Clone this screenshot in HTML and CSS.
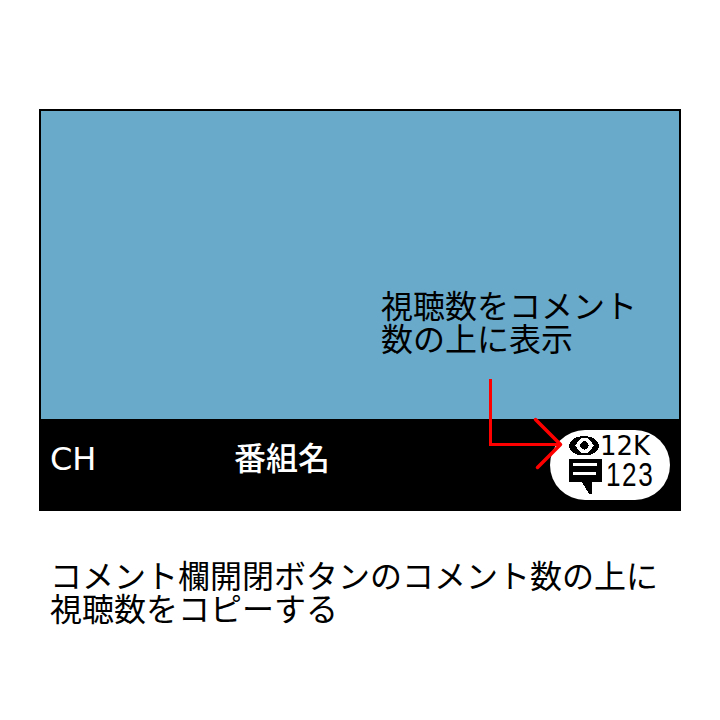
FILE: index.html
```html
<!DOCTYPE html>
<html lang="ja">
<head>
<meta charset="utf-8">
<title>視聴数</title>
<link rel="stylesheet" href="styles.css">
</head>
<body>
<main class="page">
  <section class="player">
    <div class="video">
      <p class="note">視聴数をコメント<br>数の上に表示</p>
    </div>
    <div class="bar">
      <span class="channel">CH</span>
      <span class="program">番組名</span>
      <div class="counter">
        <div class="row views">
          <svg class="eye" width="30" height="20" viewBox="0 0 30 20" shape-rendering="crispEdges">
            <path d="M0 10C0 4 7 0 15 0S30 4 30 10S23 19.500 15 19.500S0 16 0 10Z"/>
            <path fill="#fff" d="M6 9.500L10 5V14ZM25 9.500L21 5V14Z"/>
            <circle cx="15.500" cy="9.500" r="7.700" fill="#fff"/>
            <circle cx="15.500" cy="9.500" r="4.200"/>
          </svg>
          <span class="viewcount">12K</span>
        </div>
        <div class="row comments">
          <svg width="33" height="35" viewBox="0 0 33 35" shape-rendering="crispEdges">
            <path d="M0 0H33V23H23V35H20L13 23H0Z"/>
            <path fill="#fff" d="M4 4H28V7H4ZM4 13H27V16H4Z"/>
          </svg>
          <span class="count">123</span>
        </div>
      </div>
    </div>
    <svg class="arrow" width="76" height="94" viewBox="488 377 76 94">
      <path d="M490.500 379V444.500H561" />
      <path class="head" d="M535.500 419.500L560.500 444.500L537.500 467.500"/>
    </svg>
  </section>
  <p class="caption">コメント欄開閉ボタンのコメント数の上に<br>視聴数をコピーする</p>
</main>
</body>
</html>
```
FILE: styles.css
```css
body {
  margin: 0;
  background: #fff;
  color: #000;
  font-family: "Noto Sans CJK JP", sans-serif;
  font-size: 32px;
  line-height: 33px;
}

p {
  margin: 0;
  white-space: nowrap;
}

.page {
  box-sizing: border-box;
  height: 720px;
  padding: 109px 39px 0;
  overflow: hidden;
}

.player {
  position: relative;
  box-sizing: border-box;
  height: 402px;
  border: 2px solid #000;
  background: #000;
}

.video {
  box-sizing: border-box;
  height: 308px;
  padding: 177px 0 0 340px;
  background: #69a9ca;
}

.bar {
  display: flex;
  box-sizing: border-box;
  height: 90px;
  padding: 11px 9px 0;
  color: #fff;
}

.channel {
  width: 184px;
  padding-top: 13px;
  font-family: "DejaVu Sans", sans-serif;
}

.program {
  padding-top: 10px;
  font-weight: 500;
}

.counter {
  box-sizing: border-box;
  width: 120px;
  height: 70px;
  margin-left: auto;
  padding: 5px 0 0 19px;
  border-radius: 35px;
  background: #fff;
  color: #000;
}

.row {
  display: flex;
}

.views {
  height: 24px;
  font: 26px/22px "DejaVu Sans", sans-serif;
}

.eye {
  margin-top: 1px;
}

.viewcount {
  margin-left: 1px;
}

.count {
  margin-left: 4px;
  font: 34px/30px "Liberation Sans", sans-serif;
  letter-spacing: 2px;
  transform: scaleX(0.77);
  transform-origin: left;
}

.arrow {
  position: absolute;
  left: 447px;
  top: 266px;
  fill: none;
  stroke: #f00;
  stroke-width: 3;
}

.head {
  stroke-width: 3.500;
  stroke-linecap: round;
  stroke-linejoin: round;
}

.caption {
  padding: 47px 0 0 11px;
}
```
